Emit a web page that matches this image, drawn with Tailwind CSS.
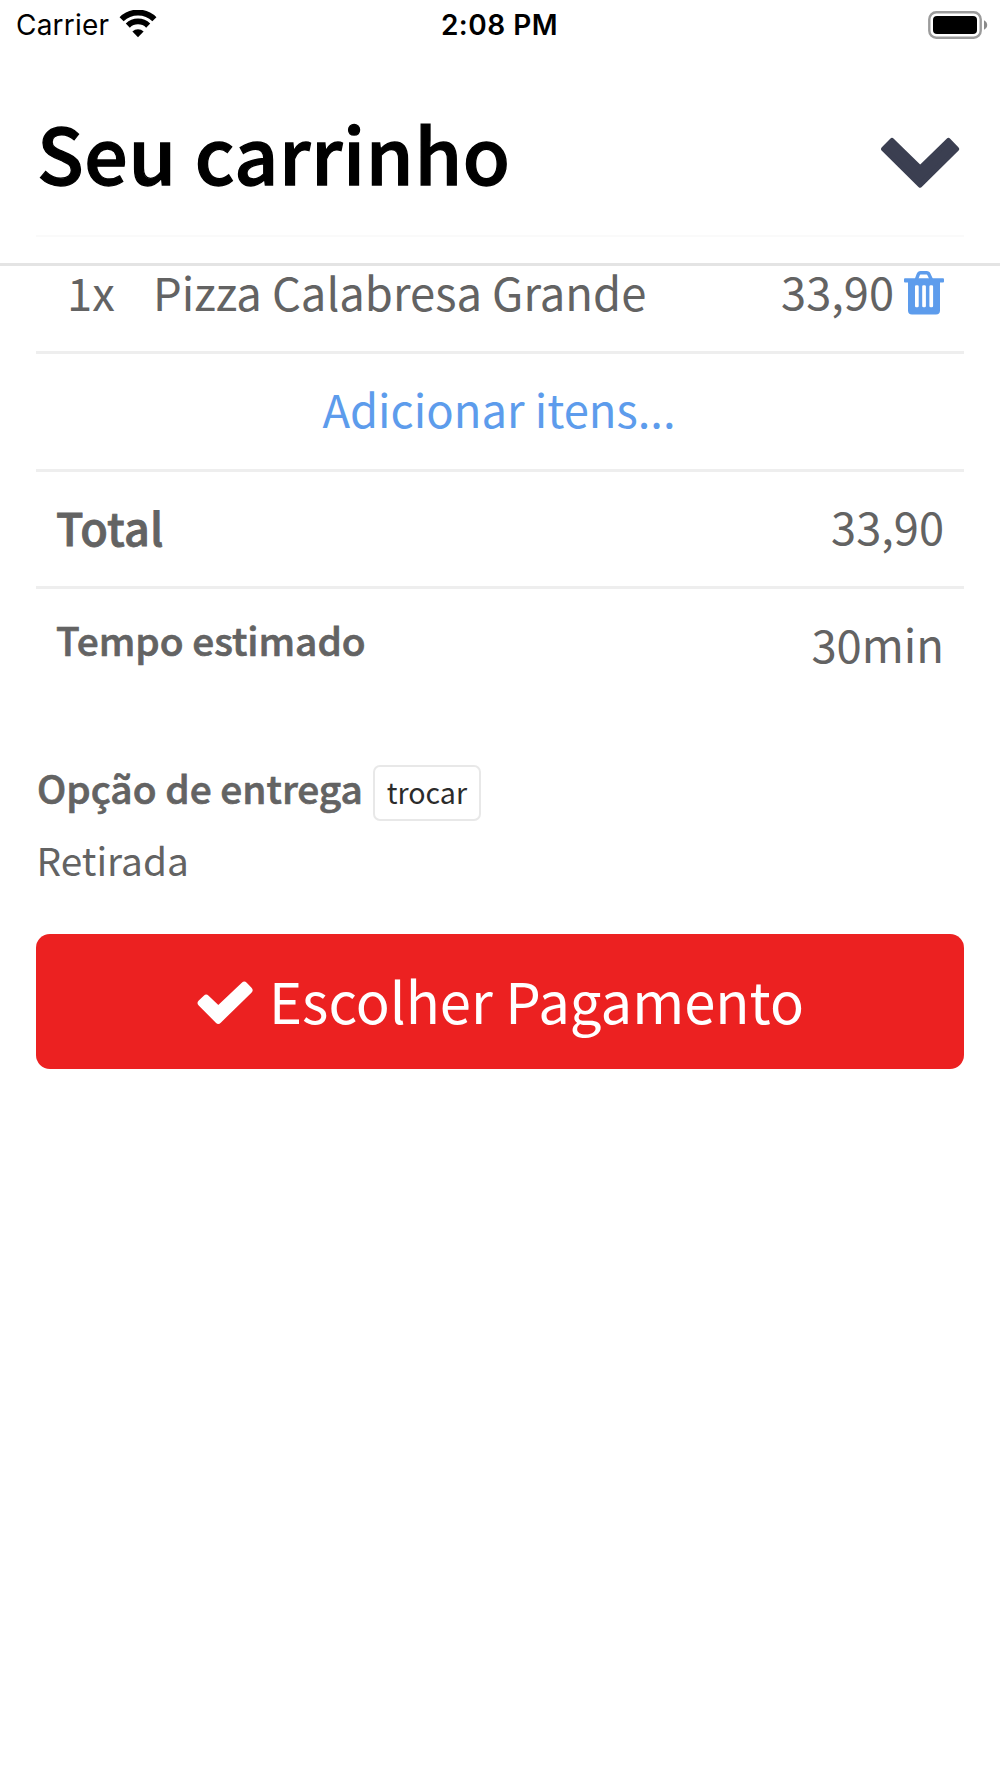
<!DOCTYPE html>
<html lang="pt-BR">
<head>
<meta charset="utf-8">
<title>Seu carrinho</title>
<script src="https://cdn.jsdelivr.net/npm/@tailwindcss/browser@4"></script>
</head>
<body class="bg-white font-['Noto_Sans_CJK_SC',sans-serif] text-[45.4px] text-[#636363]">
<div class="w-[1000px] h-[1778px] overflow-hidden flex flex-col">
  <header class="h-[266px] border-b-3 border-[#e4e4e4] text-black flex flex-col shrink-0">
    <!-- Status bar -->
    <div class="h-[50px] grid grid-cols-3 items-center font-[Inter,sans-serif] text-[28px] leading-[51px] shrink-0">
      <div class="flex items-center pl-[16px] gap-[10px]">
        <span class="text-[28px] tracking-[0.2px]">Carrier</span>
        <svg class="w-[38px] h-[28px] -mt-[3px]" viewBox="0 0 38 28">
          <g fill="none" stroke="#000" stroke-width="5.8"><path d="M2.6 9.2A23.4 23.4 0 0 1 35.4 9.2"/><path d="M8.8 15.6A14.6 14.6 0 0 1 29.2 15.6"/></g>
          <path d="M13.4 21.6A8 8 0 0 1 24.6 21.6L19 27.2Z"/>
        </svg>
      </div>
      <div class="text-center font-semibold text-[28px] tracking-[0.5px] -ml-[1px]">2:08 PM</div>
      <div class="flex justify-end pr-[12px]">
        <svg class="w-[60px] h-[28px] -mt-[1px]" viewBox="0 0 60 28">
          <rect x="1.3" y="1.3" width="51.4" height="25.4" rx="7" fill="none" stroke="#9b9b9b" stroke-width="2.4"/>
          <rect x="5" y="5" width="44" height="18" rx="4"/>
          <path d="M56 9.2Q59.2 11 59.2 14T56 18.8Z" fill="#8a8a8a"/>
        </svg>
      </div>
    </div>
    <div class="h-[187px] mx-[36px] border-b-2 border-[#fafafa] flex justify-between">
      <h1 class="pl-[1px] text-[76.8px] tracking-[0.65px] font-medium leading-[204px] [-webkit-text-stroke:1.3px_#000]">Seu carrinho</h1>
      <svg class="w-[80px] h-[54px] mr-[4px] mt-[87px]" viewBox="0 0 80 54">
        <path d="M12 4L40.200 31.600L68.400 4L76.600 12.400L40.200 48.600L3.600 12.400Z" transform="translate(0 -0.500)" fill="#3b3f51" stroke="#3b3f51" stroke-width="5" stroke-linejoin="round"/>
      </svg>
    </div>
  </header>

  <main class="px-[36px] flex flex-col">
    <div class="h-[88px] border-b-3 border-[#eee] flex leading-[50px] pl-[31px] pr-[20px]">
      <span class="w-[87px]">1x</span>
      <span class="grow -ml-[1px] mr-[1px]">Pizza Calabresa Grande</span>
      <span class="text-[45.2px]">33,90</span>
      <svg class="w-[40px] h-[46px] ml-[10px] mt-[4px]" viewBox="0 0 40 46">
        <path d="M12 10.500L14.200 4.600Q14.900 2.800 16.600 2.800H22.600Q24.300 2.800 25 4.600L27.800 10.500" fill="none" stroke="#5d9cec" stroke-width="3.400"/>
        <rect x="0" y="8.300" width="40" height="4.200" rx="1" fill="#5d9cec"/>
        <path fill="#5d9cec" fill-rule="evenodd" d="M4 11H36V40.500Q36 44.500 32 44.500H8Q4 44.500 4 40.500ZM12.300 15.300Q11 15.300 11 16.600V36Q11 37.300 12.300 37.300H13.400Q14.700 37.300 14.700 36V16.600Q14.700 15.300 13.400 15.300ZM19.500 15.300Q18.200 15.300 18.200 16.600V36Q18.200 37.300 19.500 37.300H20.600Q21.900 37.300 21.900 36V16.600Q21.900 15.300 20.600 15.300ZM26.700 15.300Q25.400 15.300 25.400 16.600V36Q25.400 37.300 26.700 37.300H27.800Q29.100 37.300 29.100 36V16.600Q29.100 15.300 27.800 15.300Z"/>
      </svg>
    </div>
    <a class="h-[118px] border-b-3 border-[#eee] text-center leading-[108px] text-[#5d9cec] pr-[2px]">Adicionar itens...</a>
    <div class="h-[117px] border-b-3 border-[#eee] flex justify-between leading-[108px] px-[20px]">
      <span class="text-[45px] tracking-[0.2px] font-medium leading-[109px] [-webkit-text-stroke:0.8px_#636363]">Total</span>
      <span class="text-[45.2px]">33,90</span>
    </div>
    <div class="h-[176px] flex justify-between leading-[108px] px-[20px]">
      <span class="text-[38.8px] font-medium leading-[101px] [-webkit-text-stroke:0.7px_#636363]">Tempo estimado</span>
      <span>30min</span>
    </div>
    <div class="h-[56px] flex items-start pl-[1px]">
      <span class="text-[38.8px] font-medium leading-[45px] [-webkit-text-stroke:0.7px_#636363]">Opção de entrega</span>
      <button class="ml-[10px] h-[56px] w-[108px] border-2 border-[#e8e8e8] rounded-[7px] text-[28.6px] leading-[50px] text-[#2b2b2b] flex justify-center items-start">trocar</button>
    </div>
    <p class="text-[38.8px] leading-[77px] h-[75px] pl-[0.5px]">Retirada</p>
    <button class="mt-[38px] h-[135px] bg-[#ec2121] rounded-[14px] text-white text-[56.2px] leading-[131px] flex justify-center items-start">
      <svg class="w-[56px] h-[44px] mt-[47px] mr-[16px] ml-[1px]" viewBox="0 0 56 44">
        <path d="M9.200 17.200L21.300 28.700L47.200 4.200L52 9.200L21.300 39.200L4.200 22Z" fill="#fff" stroke="#fff" stroke-width="7" stroke-linejoin="round"/>
      </svg>
      <span>Escolher Pagamento</span>
    </button>
  </main>
</div>
</body>
</html>
